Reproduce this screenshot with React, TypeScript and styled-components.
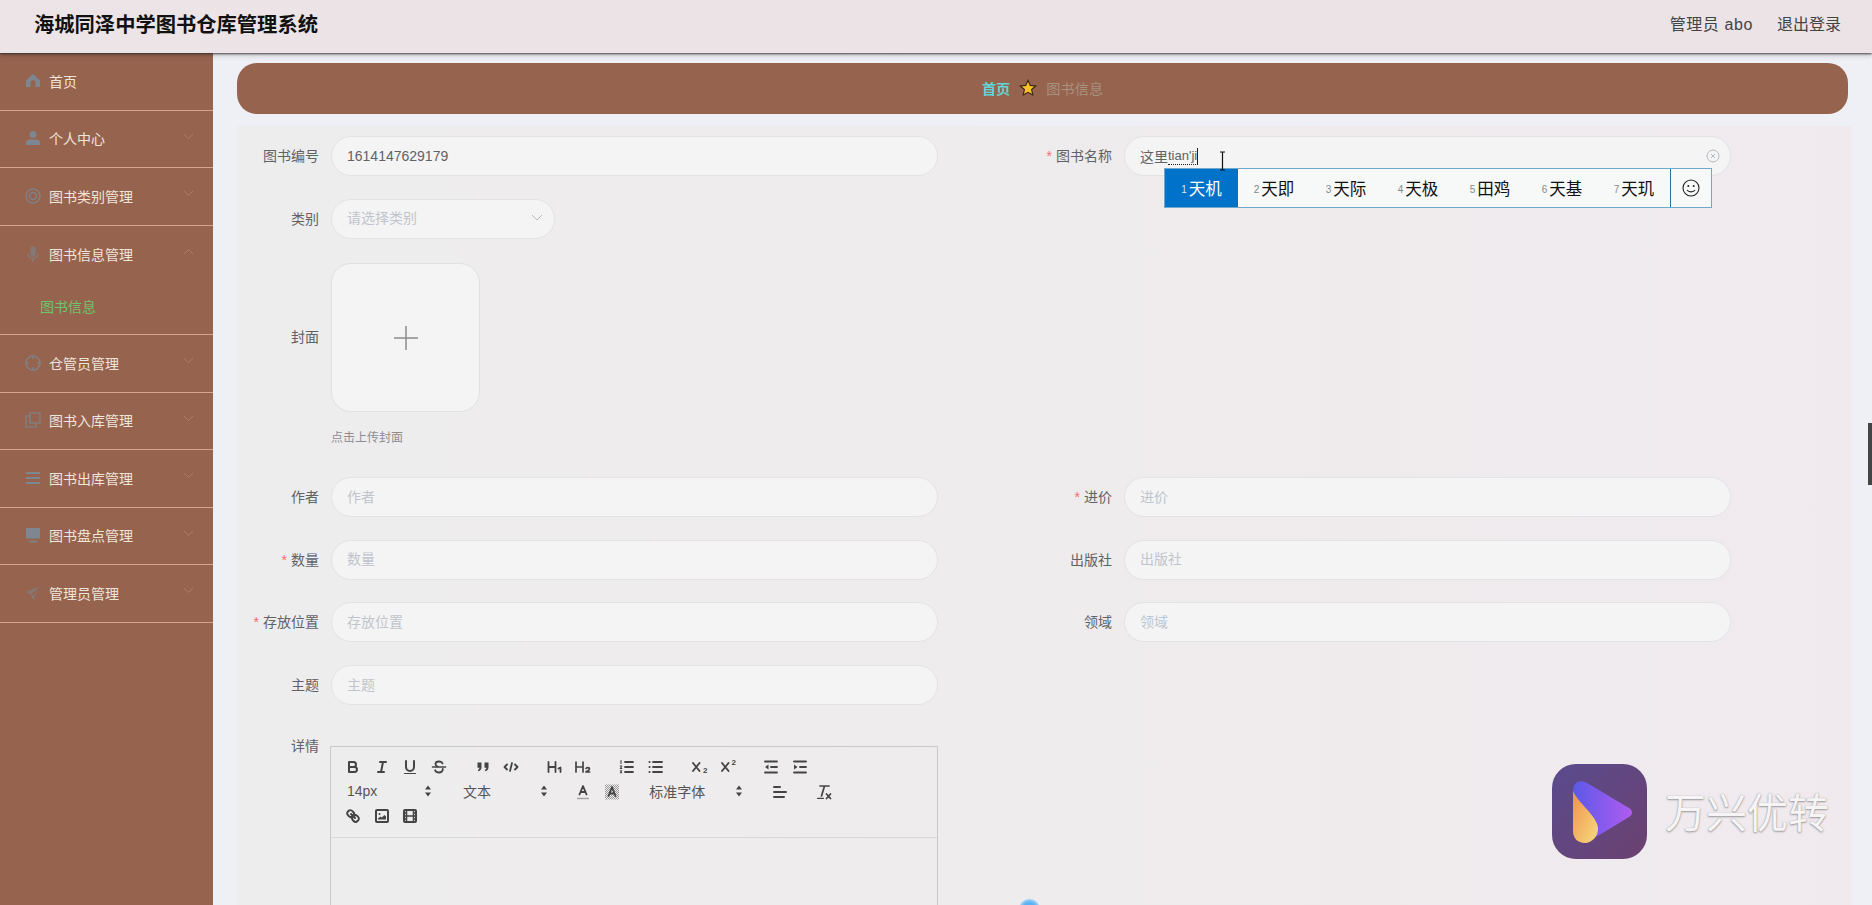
import React from "react";
import styled, { createGlobalStyle } from "styled-components";

const Global = createGlobalStyle`
  html, body { margin: 0; padding: 0; height: 100%; overflow: hidden; }
  body { font-family: "Liberation Sans", "Noto Sans CJK SC", sans-serif; font-size: 14px; color: #606266; }
  * { box-sizing: border-box; }
`;

const Page = styled.div`
  position: relative;
  height: 905px;
  display: flex;
  flex-direction: column;
  overflow: hidden;
  background: #eef0f5;
`;
const Header = styled.header`
  position: relative;
  z-index: 3;
  flex: 0 0 53px;
  display: flex;
  align-items: center;
  justify-content: space-between;
  padding: 0 31px 7px 34px;
  background: linear-gradient(90deg, #ece4e6, #ebe3e6 60%, #ece3e7);
  box-shadow: 0 1px 2px rgba(40, 40, 40, 0.8), 0 3px 5px rgba(0, 0, 0, 0.15);
`;
const Title = styled.h1`
  margin: 0;
  font-size: 20.3px;
  font-weight: 700;
  color: #111;
`;
const HeaderLinks = styled.div`
  display: flex;
  gap: 24px;
  font-size: 16px;
  color: #444;
`;
const HeaderUser = styled.span`
  letter-spacing: 0.6px;
`;
const Body = styled.div`
  flex: 1;
  display: flex;
  min-height: 0;
`;
const Sidebar = styled.nav`
  flex: 0 0 213px;
  background: #96634e;
`;
const MenuItem = styled.div`
  position: relative;
  height: 57.5px;
  display: flex;
  align-items: center;
  gap: 8px;
  padding: 0 0 1.5px 25px;
  color: #f0e5db;
  border-bottom: 1px solid #d4a48c;
`;
const MenuIcon = styled.svg`
  flex: 0 0 16px;
  width: 16px;
  height: 16px;
  color: #7d8791;
`;
const Chevron = styled.svg<{ $up?: boolean }>`
  position: absolute;
  right: 19px;
  top: 22px;
  width: 11px;
  height: 7px;
  color: #ab7d68;
  transform: ${(p) => (p.$up ? "rotate(180deg)" : "none")};
`;
const OpenGroup = styled.div`
  border-bottom: 1px solid #d4a48c;
`;
const OpenTitle = styled(MenuItem)`
  border-bottom: 0;
`;
const SubItem = styled.div`
  height: 51px;
  display: flex;
  align-items: center;
  padding: 0 0 6px 40px;
  color: #70c46c;
`;
const Main = styled.main`
  flex: 1;
  min-width: 0;
  padding: 10px 21px 0 24px;
`;
const Crumb = styled.div`
  height: 51px;
  margin: 0 3px 12px 0;
  padding-bottom: 2px;
  display: flex;
  align-items: center;
  justify-content: center;
  gap: 9px;
  border-radius: 20px;
  background: #96634e;
  color: #a8917f;
  font-size: 14.2px;
`;
const CrumbHome = styled.span`
  font-weight: 700;
  color: #5fd6d6;
`;
const Star = styled.svg`
  width: 18px;
  height: 18px;
`;
const Panel = styled.section`
  height: 780px;
  padding-top: 10px;
  background: linear-gradient(90deg, #eeedee, #eeeced 30%, #efebed 70%, #f0eaee);
`;
const Form = styled.div`
  display: grid;
  grid-template-columns: 793px 701px;
  row-gap: 22.7px;
`;
const Field = styled.div<{ $span?: boolean }>`
  position: relative;
  display: flex;
  align-items: flex-start;
  grid-column: ${(p) => (p.$span ? "1 / -1" : "auto")};
`;
const Label = styled.label<{ $h?: number }>`
  flex: 0 0 94px;
  padding-right: 12px;
  text-align: right;
  color: #606266;
  line-height: ${(p) => p.$h ?? 40}px;
`;
const Required = styled.span`
  margin-right: 4px;
  color: #f56c6c;
`;
const Input = styled.div<{ $w?: number; $muted?: boolean }>`
  position: relative;
  width: ${(p) => p.$w ?? 607}px;
  height: 40px;
  display: flex;
  align-items: center;
  justify-content: space-between;
  padding: 0 10px ${(p) => (p.$muted ? 3 : 0)}px 15px;
  border: 1px solid #e3e3e5;
  border-radius: 20px;
  background: #f4f4f5;
  color: ${(p) => (p.$muted ? "#c0c4cc" : "#606266")};
`;
const Typed = styled.span`
  display: flex;
  align-items: center;
`;
const Composing = styled.span`
  font-size: 13px;
  border-bottom: 1px dotted #222;
  border-right: 1px solid #222;
  line-height: 16px;
`;
const SmallIcon = styled.svg`
  width: 14px;
  height: 14px;
  color: #b5b8be;
`;
const Upload = styled.div`
  display: flex;
  flex-direction: column;
  margin-top: 2px;
`;
const UploadBox = styled.div`
  width: 149px;
  height: 149px;
  display: flex;
  align-items: center;
  justify-content: center;
  border: 1px solid #e0e0e2;
  border-radius: 20px;
  background: #f4f4f5;
  color: #8c8c8c;
`;
const Hint = styled.div`
  margin-top: 18px;
  height: 24px;
  font-size: 12px;
  line-height: 17px;
  color: #8a8d93;
`;
const Ime = styled.div`
  position: absolute;
  z-index: 2;
  left: 134px;
  top: 32px;
  width: 548px;
  height: 40px;
  display: flex;
  border: 1px solid #6fa9cb;
  background: #f7f8f8;
`;
const ImeList = styled.div`
  flex: 1;
  display: flex;
`;
const Cand = styled.div<{ $on?: boolean }>`
  flex: 0 0 ${(p) => (p.$on ? 73 : 72)}px;
  display: flex;
  align-items: center;
  justify-content: center;
  gap: 2px;
  font-size: 16.5px;
  background: ${(p) => (p.$on ? "#0072c9" : "transparent")};
  color: ${(p) => (p.$on ? "#fff" : "#111")};
`;
const CandNum = styled.span<{ $on?: boolean }>`
  font-size: 10px;
  padding-top: 3px;
  color: ${(p) => (p.$on ? "#d5e8f7" : "#888")};
`;
const Emoji = styled.div`
  flex: 0 0 41px;
  display: flex;
  align-items: center;
  justify-content: center;
  border-left: 1px solid #2b6f95;
  color: #222;
`;
const Caret = styled.svg`
  position: absolute;
  z-index: 3;
  left: 188px;
  top: 15px;
  width: 9px;
  height: 20px;
  color: #111;
`;
const Editor = styled.div`
  width: 608px;
  margin: 18px 0 0 -1px;
  border: 1px solid #c9c9cb;
`;
const Toolbar = styled.div`
  height: 91px;
  padding: 8px 8px 0;
  border-bottom: 1px solid #d8d8da;
`;
const ToolRow = styled.div`
  height: 24.5px;
  display: flex;
  align-items: center;
`;
const ToolGroup = styled.div<{ $after?: number }>`
  display: flex;
  align-items: center;
  margin-right: ${(p) => p.$after ?? 15}px;
`;
const ToolButton = styled.span`
  flex: 0 0 28.6px;
  height: 24px;
  display: flex;
  align-items: center;
  justify-content: center;
  color: #444;
`;
const ToolSvg = styled.svg`
  width: 18px;
  height: 18px;
  fill: none;
  stroke: currentColor;
  stroke-width: 2;
  stroke-linecap: round;
  stroke-linejoin: round;
`;
const Picker = styled.span<{ $w?: number }>`
  width: ${(p) => p.$w ?? 98}px;
  height: 24px;
  padding: 0 0 2px 8px;
  display: flex;
  align-items: center;
  justify-content: space-between;
  font-size: 14px;
  color: #555;
`;
const PickerArrow = styled.svg`
  width: 18px;
  height: 18px;
  color: #444;
`;
const EditBody = styled.div`
  height: 300px;
`;
const Scroll = styled.div`
  position: absolute;
  right: 0;
  top: 423px;
  width: 4px;
  height: 62px;
  background: #444;
`;
const Pointer = styled.div`
  position: absolute;
  left: 1019px;
  top: 899px;
  width: 21px;
  height: 21px;
  border-radius: 50%;
  background: radial-gradient(circle, #5cb2f5 0 45%, #a5d4f7 70%);
`;
const Watermark = styled.div`
  position: absolute;
  z-index: 4;
  left: 1552px;
  top: 764px;
  display: flex;
  align-items: center;
  gap: 18px;
`;
const Logo = styled.svg`
  width: 95px;
  height: 95px;
`;
const WatermarkText = styled.span`
  margin-top: 4px;
  font-size: 41px;
  line-height: 50px;
  color: #f6f4f5;
  text-shadow: 0 1px 2px rgba(100, 100, 100, 0.6), 0 0 1px rgba(100, 100, 100, 0.5);
`;

const G = { fill: "currentColor" } as const;
const NF = { fill: "none", stroke: "currentColor", strokeWidth: 1.6 } as const;
const icons: Record<string, React.ReactNode> = {
  home: <path {...G} d="M8 1 1 7.5V14h4.5V9.5a2.5 2.5 0 0 1 5 0V14H15V7.5z" />,
  user: (
    <>
      <circle {...G} cx="8" cy="4.5" r="3.5" />
      <path {...G} d="M1 15v-2.5C1 10.5 3 9.5 5 9.5h6c2 0 4 1 4 3V15z" />
    </>
  ),
  target: (
    <g opacity=".8">
      <circle {...NF} cx="8" cy="8" r="7" />
      <circle {...NF} cx="8" cy="8" r="3.5" />
    </g>
  ),
  mic: (
    <g opacity=".6">
      <rect {...G} x="5.2" y="0.5" width="5.6" height="10" rx="2.8" />
      <path {...NF} d="M3 7.5a5 5 0 0 0 10 0M8 12.5V16" />
    </g>
  ),
  clock: (
    <g opacity=".8">
      <circle {...NF} cx="8" cy="8" r="7" />
      <path {...NF} d="M8 1v3M8 12v3M1 8h3M12 8h3" />
    </g>
  ),
  copy: (
    <g opacity=".7">
      <path {...NF} d="M5 1h10v10H5z" />
      <path {...NF} d="M5 4H1v11h10v-4" />
    </g>
  ),
  menu: <path {...NF} strokeWidth="2" d="M1 3h14M1 8h14M1 13h14" />,
  monitor: (
    <>
      <rect {...G} x="1" y="1" width="14" height="10.5" />
      <path {...NF} d="M4 14.5h8" />
    </>
  ),
  send: (
    <g opacity=".6">
      <path {...G} d="M15 1 1 7l5 2.5L8 15zM6 9.500 15 1l-6.200 9.500z" />
    </g>
  ),
};

const Svg18 = ({ children }: { children: React.ReactNode }) => (
  <ToolButton>
    <ToolSvg viewBox="0 0 18 18">{children}</ToolSvg>
  </ToolButton>
);
const Fill = { fill: "currentColor", stroke: "none" } as const;

const tool = {
  bold: (
    <>
      <path d="M5 4h4.500a2.500 2.500 0 0 1 0 5H5z" />
      <path d="M5 9h5.500a2.500 2.500 0 0 1 0 5H5z" />
    </>
  ),
  italic: <path d="M7 4h6M5 14h6M8 14l2-10" />,
  underline: (
    <>
      <path d="M5 3v6a4 4 0 0 0 8 0V3" />
      <rect {...Fill} x="3" y="15" width="12" height="1" rx=".5" />
    </>
  ),
  strike: (
    <>
      <path strokeWidth="1.800" d="M12.500 5.500C12 4.200 10.600 3.500 9 3.500c-2 0-3.500 1-3.500 2.600 0 1.200.8 2 2 2.400M12.800 11c.2 2-1.500 3.500-3.800 3.500-1.800 0-3.200-.8-3.800-2.200" />
      <path strokeWidth="1.600" d="M2.500 9h13" />
    </>
  ),
  quote: (
    <>
      <path {...Fill} d="M3.500 4.500h4v4.700c0 2-1.200 3.500-3 4l-.7-1.200c1-.4 1.500-1.100 1.600-2.200H3.500z" />
      <path {...Fill} d="M10.500 4.500h4v4.700c0 2-1.200 3.500-3 4l-.7-1.200c1-.4 1.500-1.100 1.600-2.200h-1.900z" />
    </>
  ),
  code: <path strokeWidth="1.800" d="M5 6.500 2.500 9 5 11.500M13 6.500 15.500 9 13 11.500M10 5 8 13" />,
  h1: <path strokeWidth="1.800" d="M2.500 4v10M9.500 4v10M2.500 9h7M12.500 10.500l2-1V14" />,
  h2: <path strokeWidth="1.700" d="M2 4v10M9 4v10M2 9h7M12 10.500c.4-1.200 3.500-1.400 3.500.5 0 1.200-2 1.800-3.500 3h3.600" />,
  ol: (
    <>
      <path strokeWidth="1.800" d="M7 4h8M7 9h8M7 14h8" />
      <path strokeWidth="1.100" d="M3 2.500v3M2.300 8c.8-.6 1.700 0 1.200.8L2.300 10.500h1.500M2.300 12.800h1.400l-.7 1 .7 1h-1.400" />
    </>
  ),
  ul: (
    <>
      <path strokeWidth="1.800" d="M6 4h9M6 9h9M6 14h9" />
      <path strokeWidth="2" d="M2.500 4h.1M2.500 9h.1M2.500 14h.1" />
    </>
  ),
  sub: <path strokeWidth="1.900" d="M3 5l6.500 8M9.500 5 3 13" />,
  sup: <path strokeWidth="1.900" d="M3 5l6.500 8M9.500 5 3 13" />,
  outdent: (
    <>
      <path strokeWidth="1.800" d="M3 3.500h12M9 9h6M3 14.500h12" />
      <path {...Fill} d="M6.500 6.500v5L3 9z" />
    </>
  ),
  indent: (
    <>
      <path strokeWidth="1.800" d="M3 3.500h12M9 9h6M3 14.500h12" />
      <path {...Fill} d="M3 6.500v5L6.500 9z" />
    </>
  ),
  color: (
    <>
      <path strokeWidth="1.800" d="M5.500 11.500 9 3l3.500 8.500M6.500 9h5" />
      <rect {...Fill} x="3" y="14.800" width="12" height="1.400" opacity=".45" />
    </>
  ),
  bg: (
    <>
      <defs>
        <pattern id="ql-dots" width="2" height="2" patternUnits="userSpaceOnUse">
          <rect {...Fill} width="1" height="1" />
          <rect {...Fill} x="1" y="1" width="1" height="1" />
        </pattern>
      </defs>
      <rect x="2" y="1.500" width="14" height="15" fill="url(#ql-dots)" stroke="none" opacity=".5" />
      <path strokeWidth="1.800" d="M5.500 13 9 4l3.500 9M6.500 10.500h5" />
    </>
  ),
  align: <path d="M3 4h6M3 9h12M3 14h10" />,
  clean: (
    <>
      <path strokeWidth="1.700" d="M5 3h9M6.500 13l3-10M11.500 11l4 4.500M15.500 11l-4 4.500" />
      <rect {...Fill} x="2" y="14.800" width="7" height="1.200" rx=".6" />
    </>
  ),
  link: (
    <>
      <path d="M7 7l4 4" />
      <path d="M8.900 4.577a3.476 3.476 0 0 1 .36 4.679A3.476 3.476 0 0 1 4.577 8.900C3.185 7.500 2.035 6.400 4.217 4.217S7.500 3.185 8.900 4.577Z" />
      <path d="M13.423 9.100a3.476 3.476 0 0 0-4.679-.36 3.476 3.476 0 0 0 .36 4.679c1.392 1.392 2.500 2.542 4.679.36S14.815 10.500 13.423 9.100Z" />
    </>
  ),
  image: (
    <>
      <rect x="3" y="3" width="12" height="12" rx="1" />
      <circle {...Fill} cx="6.500" cy="7" r="1" />
      <path {...Fill} d="M5 12.500v-1l2.500-2 1.300 1 2.700-2.500 1.500 1.500v3z" />
    </>
  ),
  video: (
    <>
      <rect x="3" y="3" width="12" height="12" rx="1" />
      <path strokeWidth="1.500" d="M5.500 3v12M12.500 3v12M5.500 9h7M3 6h2.500M3 9h2.500M3 12h2.500M12.500 6H15M12.500 9H15M12.500 12H15" />
    </>
  ),
};

const Tool = ({ n }: { n: keyof typeof tool }) => <Svg18>{tool[n]}</Svg18>;

const SubMark = styled.span<{ $sup?: boolean }>`
  position: absolute;
  left: 18px;
  top: ${(p) => (p.$sup ? 3 : 11)}px;
  font-size: 8px;
  line-height: 9px;
  color: #444;
  font-weight: 700;
`;
const ScriptTool = styled.span`
  position: relative;
  flex: 0 0 28.6px;
  height: 24px;
`;

const PickerBox = ({ label, w }: { label: string; w?: number }) => (
  <Picker $w={w}>
    {label}
    <PickerArrow viewBox="0 0 18 18">
      <path fill="currentColor" d="M6 7.500 9 3.500l3 4zM6 10.500l3 4 3-4z" />
    </PickerArrow>
  </Picker>
);

const ChevronDown = ({ up }: { up?: boolean }) => (
  <Chevron $up={up} viewBox="0 0 11 7">
    <path d="M1 1l4.500 4.500L10 1" fill="none" stroke="currentColor" strokeWidth="1" />
  </Chevron>
);

const Nav = ({ icon, label, chevron = true }: { icon: string; label: string; chevron?: boolean }) => (
  <MenuItem>
    <MenuIcon viewBox="0 0 16 16">{icons[icon]}</MenuIcon>
    {label}
    {chevron && <ChevronDown />}
  </MenuItem>
);

const TextField = ({ label, required, placeholder }: { label: string; required?: boolean; placeholder: string }) => (
  <Field>
    <Label>
      {required && <Required>*</Required>}
      {label}
    </Label>
    <Input $muted>{placeholder}</Input>
  </Field>
);

const candidates = ["天即", "天际", "天极", "田鸡", "天基", "天玑"];

export default function App() {
  return (
    <Page>
      <Global />
      <Header>
        <Title>海城同泽中学图书仓库管理系统</Title>
        <HeaderLinks>
          <HeaderUser>管理员 abo</HeaderUser>
          <span>退出登录</span>
        </HeaderLinks>
      </Header>
      <Body>
        <Sidebar>
          <Nav icon="home" label="首页" chevron={false} />
          <Nav icon="user" label="个人中心" />
          <Nav icon="target" label="图书类别管理" />
          <OpenGroup>
            <OpenTitle>
              <MenuIcon viewBox="0 0 16 16">{icons.mic}</MenuIcon>
              图书信息管理
              <ChevronDown up />
            </OpenTitle>
            <SubItem>图书信息</SubItem>
          </OpenGroup>
          <Nav icon="clock" label="仓管员管理" />
          <Nav icon="copy" label="图书入库管理" />
          <Nav icon="menu" label="图书出库管理" />
          <Nav icon="monitor" label="图书盘点管理" />
          <Nav icon="send" label="管理员管理" />
        </Sidebar>
        <Main>
          <Crumb>
            <CrumbHome>首页</CrumbHome>
            <Star viewBox="0 0 16 16">
              <path
                d="M8 1.200l2 4.500 4.800.5-3.600 3.200 1 4.800L8 11.800l-4.200 2.400 1-4.800L1.200 6.200 6 5.700z"
                fill="#f7c12c"
                stroke="#3a2412"
                strokeWidth="1"
              />
            </Star>
            <span>图书信息</span>
          </Crumb>
          <Panel>
            <Form>
              <Field>
                <Label>图书编号</Label>
                <Input>1614147629179</Input>
              </Field>
              <Field>
                <Label>
                  <Required>*</Required>图书名称
                </Label>
                <Input>
                  <Typed>
                    这里<Composing>tian'ji</Composing>
                  </Typed>
                  <SmallIcon viewBox="0 0 14 14">
                    <circle cx="7" cy="7" r="6" fill="none" stroke="currentColor" />
                    <path d="M5 5l4 4M9 5l-4 4" stroke="currentColor" />
                  </SmallIcon>
                </Input>
                <Caret viewBox="0 0 9 20">
                  <path d="M2 1h5M2 19h5M4.500 1v18" stroke="currentColor" strokeWidth="1.200" fill="none" />
                </Caret>
                <Ime>
                  <ImeList>
                    <Cand $on>
                      <CandNum $on>1</CandNum>天机
                    </Cand>
                    {candidates.map((c, i) => (
                      <Cand key={c}>
                        <CandNum>{i + 2}</CandNum>
                        {c}
                      </Cand>
                    ))}
                  </ImeList>
                  <Emoji>
                    <svg width="18" height="18" viewBox="0 0 18 18">
                      <circle cx="9" cy="9" r="8" fill="none" stroke="currentColor" strokeWidth="1.100" />
                      <circle cx="6.300" cy="7" r="1" fill="currentColor" />
                      <circle cx="11.700" cy="7" r="1" fill="currentColor" />
                      <path d="M5 11c1.500 2.500 6.500 2.500 8 0" fill="none" stroke="currentColor" strokeWidth="1.100" />
                    </svg>
                  </Emoji>
                </Ime>
              </Field>
              <Field $span>
                <Label>类别</Label>
                <Input $w={224} $muted>
                  请选择类别
                  <SmallIcon viewBox="0 0 14 14">
                    <path d="M2 5l5 5 5-5" fill="none" stroke="currentColor" />
                  </SmallIcon>
                </Input>
              </Field>
              <Field $span>
                <Label $h={153}>封面</Label>
                <Upload>
                  <UploadBox>
                    <svg width="24" height="24" viewBox="0 0 24 24">
                      <path d="M12 0v24M0 12h24" stroke="currentColor" strokeWidth="1.500" />
                    </svg>
                  </UploadBox>
                  <Hint>点击上传封面</Hint>
                </Upload>
              </Field>
              <TextField label="作者" placeholder="作者" />
              <TextField label="进价" placeholder="进价" required />
              <TextField label="数量" placeholder="数量" required />
              <TextField label="出版社" placeholder="出版社" />
              <TextField label="存放位置" placeholder="存放位置" required />
              <TextField label="领域" placeholder="领域" />
              <Field $span>
                <Label>主题</Label>
                <Input $muted>主题</Input>
              </Field>
              <Field $span>
                <Label $h={36}>详情</Label>
                <Editor>
                  <Toolbar>
                    <ToolRow>
                      <ToolGroup>
                        <Tool n="bold" />
                        <Tool n="italic" />
                        <Tool n="underline" />
                        <Tool n="strike" />
                      </ToolGroup>
                      <ToolGroup>
                        <Tool n="quote" />
                        <Tool n="code" />
                      </ToolGroup>
                      <ToolGroup>
                        <Tool n="h1" />
                        <Tool n="h2" />
                      </ToolGroup>
                      <ToolGroup>
                        <Tool n="ol" />
                        <Tool n="ul" />
                      </ToolGroup>
                      <ToolGroup>
                        <ScriptTool>
                          <Svg18>{tool.sub}</Svg18>
                          <SubMark>2</SubMark>
                        </ScriptTool>
                        <ScriptTool>
                          <Svg18>{tool.sup}</Svg18>
                          <SubMark $sup>2</SubMark>
                        </ScriptTool>
                      </ToolGroup>
                      <ToolGroup>
                        <Tool n="outdent" />
                        <Tool n="indent" />
                      </ToolGroup>
                    </ToolRow>
                    <ToolRow>
                      <ToolGroup $after={18}>
                        <PickerBox label="14px" />
                      </ToolGroup>
                      <ToolGroup $after={16}>
                        <PickerBox label="文本" />
                      </ToolGroup>
                      <ToolGroup $after={15}>
                        <Tool n="color" />
                        <Tool n="bg" />
                      </ToolGroup>
                      <ToolGroup $after={17.5}>
                        <PickerBox label="标准字体" w={107} />
                      </ToolGroup>
                      <ToolGroup>
                        <Tool n="align" />
                      </ToolGroup>
                      <ToolGroup>
                        <Tool n="clean" />
                      </ToolGroup>
                    </ToolRow>
                    <ToolRow>
                      <ToolGroup>
                        <Tool n="link" />
                        <Tool n="image" />
                        <Tool n="video" />
                      </ToolGroup>
                    </ToolRow>
                  </Toolbar>
                  <EditBody />
                </Editor>
              </Field>
            </Form>
          </Panel>
        </Main>
      </Body>
      <Scroll />
      <Pointer />
      <Watermark>
        <Logo viewBox="0 0 95 95">
          <defs>
            <linearGradient id="wm-bg" x1="0" y1="0" x2="1" y2="1">
              <stop offset="0" stopColor="#5a4b8e" />
              <stop offset="1" stopColor="#6b4170" />
            </linearGradient>
            <linearGradient id="wm-play" x1="0" y1="0" x2="1" y2="0">
              <stop offset="0" stopColor="#5b59e8" />
              <stop offset="1" stopColor="#b05cf0" />
            </linearGradient>
            <linearGradient id="wm-leaf" x1="0" y1="0" x2="1" y2="1">
              <stop offset="0" stopColor="#f28f4e" />
              <stop offset="1" stopColor="#f6dc7e" />
            </linearGradient>
          </defs>
          <rect width="95" height="95" rx="24" fill="url(#wm-bg)" />
          <path d="M21 27c0-9 7-12 14-8l42 25c4 2.500 4 6.500 0 9L44 73c-12 6-23-2-23-12z" fill="url(#wm-play)" />
          <path d="M21 27c5 12 24 25 25 37 .5 8-6 15-13 15-7.500 0-12-5-12-12z" fill="url(#wm-leaf)" />
        </Logo>
        <WatermarkText>万兴优转</WatermarkText>
      </Watermark>
    </Page>
  );
}
